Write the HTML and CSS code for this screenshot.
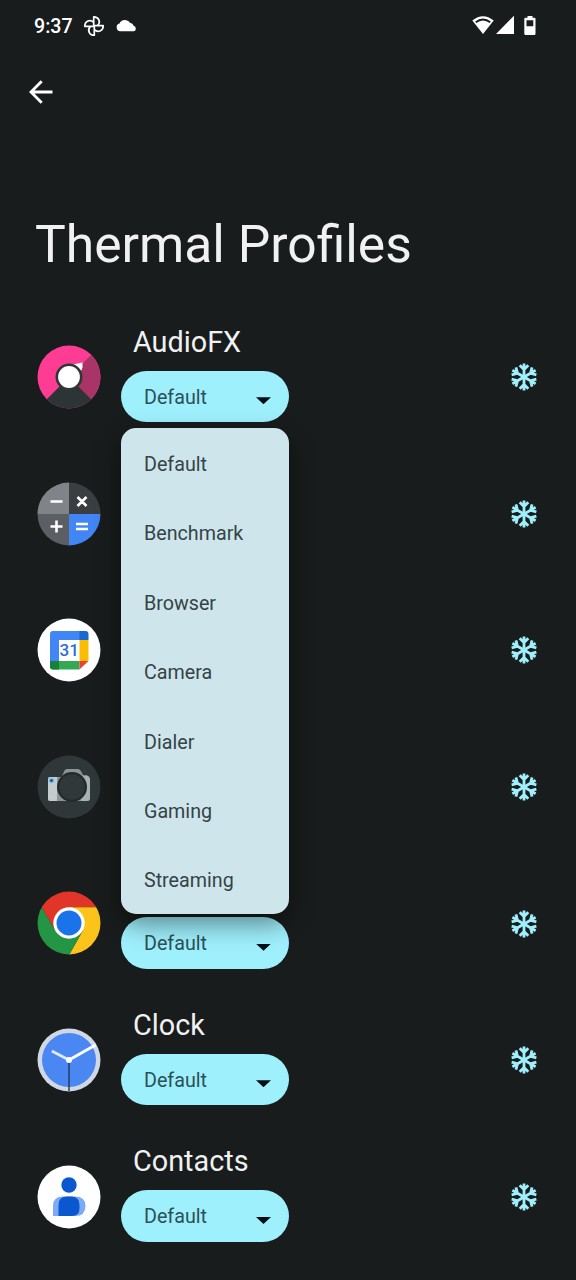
FILE: index.html
```html
<!DOCTYPE html>
<html lang="en">
<head>
<meta charset="utf-8">
<title>Thermal Profiles</title>
<link rel="stylesheet" href="styles.css">
</head>
<body>
<svg width="0" height="0" class="defs" aria-hidden="true">
  <defs>
    <clipPath id="disc"><circle cx="32" cy="32" r="31.5"/></clipPath>
    <g id="arm">
      <path d="M0 0V-13.4M-4.300 -11.800L0 -7.500L4.300 -11.800" fill="none" stroke="#a0effc" stroke-width="2.800"/>
    </g>
    <g id="flake">
      <use href="#arm"/>
      <use href="#arm" transform="rotate(60)"/>
      <use href="#arm" transform="rotate(120)"/>
      <use href="#arm" transform="rotate(180)"/>
      <use href="#arm" transform="rotate(240)"/>
      <use href="#arm" transform="rotate(300)"/>
    </g>
  </defs>
</svg>
<header class="status">
  <span class="time">9:37</span>
  <svg class="fan" width="22" height="22" viewBox="-11 -11 22 22" fill="none" stroke="#fff" stroke-width="1.7" stroke-linejoin="round">
    <path d="M-0.300 0V-9.200C5 -9.200 7 -3.800 3.600 -0.300"/>
    <path d="M-0.300 0V-9.200C5 -9.200 7 -3.800 3.600 -0.300" transform="rotate(90)"/>
    <path d="M-0.300 0V-9.200C5 -9.200 7 -3.800 3.600 -0.300" transform="rotate(180)"/>
    <path d="M-0.300 0V-9.200C5 -9.200 7 -3.800 3.600 -0.300" transform="rotate(270)"/>
  </svg>
  <svg class="cloud" width="21" height="13" viewBox="0 0 20 12"><path d="M4 11.5A3.8 3.8 0 0 1 3.3 4.1A5.8 5.8 0 0 1 13.3 3.3A4 4 0 0 1 16.8 6.3A2.7 2.7 0 0 1 17 11.5Z" fill="#fff"/></svg>
  <span class="grow"></span>
  <svg width="66" height="22" viewBox="0 0 66 22" fill="#fff">
    <path d="M0.3 5.6Q11 -3.3 21.7 5.6L11 19Z"/>
    <path d="M3.7 7.3Q11 1.7 18.3 7.3" fill="none" stroke="#191c1c" stroke-width="1.8"/>
    <path d="M24 19L42 0.8V19Z"/>
    <path fill-rule="evenodd" d="M55.500 1H60.500V2.800H62.500Q63.500 2.800 63.500 3.800V18.500Q63.500 20 62.500 20H53.500Q52.300 20 52.300 18.500V3.800Q52.300 2.800 53.500 2.800H55.500ZM54.500 5.300V11.200H61.300V5.300Z"/>
  </svg>
</header>
<nav class="nav">
  <svg width="24" height="24" viewBox="0 0 24 24" fill="none" stroke="#fff" stroke-width="2.8"><path d="M23.500 12H2.500M12.700 1.200L2 12L12.700 22.800"/></svg>
</nav>
<h1 class="title">Thermal Profiles</h1>
<main class="apps">
  <section class="row">
    <svg class="icon" viewBox="0 0 64 64"><g clip-path="url(#disc)">
      <path d="M0 0H64V64H0Z" fill="#fe3c94"/><path d="M32 32L64 0V64Z" fill="#a93468"/><path d="M32 32L64 64H0Z" fill="#2d3435"/>
      <path d="M34 20L45.500 17.500V22.500L42 31Z" fill="#fff"/><circle cx="32" cy="32" r="13.500" fill="#303638"/><circle cx="32" cy="32" r="10.900" fill="#fff"/></g></svg>
    <div class="profile"><h2 class="name">AudioFX</h2>
      <div class="anchor"><button class="select">Default<i class="caret"></i></button>
        <ul class="menu"><li>Default</li><li>Benchmark</li><li>Browser</li><li>Camera</li><li>Dialer</li><li>Gaming</li><li>Streaming</li></ul>
      </div></div>
    <svg class="snow" viewBox="-14 -14 28 28"><use href="#flake"/></svg>
  </section>
  <section class="row">
    <svg class="icon" viewBox="0 0 64 64"><g clip-path="url(#disc)">
      <path d="M0 0H32V32H0Z" fill="#808489"/><path d="M32 0H64V32H32Z" fill="#3a3e41"/><path d="M0 32H32V64H0Z" fill="#5b5e62"/><path d="M32 32H64V64H32Z" fill="#4285f4"/>
      <path d="M13.500 19.500H25.500M13.500 44.500H25.500M19.500 38.500V50.500M40.500 15L49.500 24M49.500 15L40.500 24M39 42H51M39 47H51" stroke="#fff" stroke-width="2.600"/></g></svg>
    <div class="profile"></div>
    <svg class="snow" viewBox="-14 -14 28 28"><use href="#flake"/></svg>
  </section>
  <section class="row">
    <svg class="icon" viewBox="0 0 64 64"><circle cx="32" cy="32" r="31.500" fill="#fff"/>
      <path d="M16 13H43V22H22V43H13V16Q13 13 16 13Z" fill="#4285f4"/><path d="M42.500 13H48.500Q51.500 13 51.500 16V22H42.500Z" fill="#1967d2"/>
      <path d="M42.500 22H51.500V43H42.500Z" fill="#fbbc04"/><path d="M13 43H42.500V51.500H16Q13 51.500 13 48.500Z" fill="#34a853"/><path d="M13 43H22V51.500H16Q13 51.500 13 48.500Z" fill="#188038"/><path d="M42.500 43H51.500L42.500 51.500Z" fill="#ea4335"/>
      <text x="32.200" y="38" class="day" text-anchor="middle">31</text></svg>
    <div class="profile"></div>
    <svg class="snow" viewBox="-14 -14 28 28"><use href="#flake"/></svg>
  </section>
  <section class="row">
    <svg class="icon" viewBox="0 0 64 64"><circle cx="32" cy="32" r="31.500" fill="#303738"/>
      <path d="M13 22H24.500L27.500 15.500Q28.200 14 30 14H41Q42.500 14 43.500 15.500L46.500 20.500H50Q53 21.500 53 25V43Q53 46 50 46H13Q11 46 11 44V24Q11 22 13 22Z" fill="#8b9694"/>
      <path d="M13 22H20V46H13Q11 46 11 44V24Q11 22 13 22Z" fill="#c4cccd"/><path d="M46 20.500H50Q53 21.500 53 25V43Q53 46 50 46H44Z" fill="#a5b3b1"/>
      <circle cx="35" cy="32" r="15" fill="#242a2c"/><circle cx="35" cy="32" r="12.800" fill="#303839"/><circle cx="14.500" cy="25.500" r="3" fill="#80c4ef"/><circle cx="14.500" cy="25.500" r="1.600" fill="#315870"/></svg>
    <div class="profile"></div>
    <svg class="snow" viewBox="-14 -14 28 28"><use href="#flake"/></svg>
  </section>
  <section class="row">
    <svg class="icon" viewBox="0 0 64 64"><g clip-path="url(#disc)">
      <path d="M0 0H64V16.300H32L18.400 40L4.500 16Z" fill="#e23529"/><path d="M32 16.300H64V64H32L45.600 39.900Z" fill="#fcc31b"/><path d="M4.500 16L18.400 40H45.600L32 64H0V8Z" fill="#249545"/></g>
      <circle cx="32" cy="32" r="15.700" fill="#fff"/><circle cx="32" cy="32" r="12.500" fill="#1a73e8"/></svg>
    <div class="profile"><div class="gap"></div><button class="select">Default<i class="caret"></i></button></div>
    <svg class="snow" viewBox="-14 -14 28 28"><use href="#flake"/></svg>
  </section>
  <section class="row">
    <svg class="icon" viewBox="0 0 64 64"><circle cx="32" cy="32" r="31.500" fill="#cfd8e4"/><circle cx="32" cy="32" r="27" fill="#4a87f3"/>
      <path d="M32 32V63" stroke="#263c60" stroke-width="1.500"/><path d="M14.800 23L32 32" stroke="#dfebff" stroke-width="2.600"/><path d="M32 32L58.500 17" stroke="#fff" stroke-width="3"/><circle cx="32" cy="32" r="3" fill="#fff"/></svg>
    <div class="profile"><h2 class="name">Clock</h2><button class="select">Default<i class="caret"></i></button></div>
    <svg class="snow" viewBox="-14 -14 28 28"><use href="#flake"/></svg>
  </section>
  <section class="row">
    <svg class="icon" viewBox="0 0 64 64"><circle cx="32" cy="32" r="31.500" fill="#fff"/>
      <path d="M16 51V41Q16 31.500 26 31.500H38Q48.500 31.500 48.500 41Q48.500 51 38 51Z" fill="#7baaf7"/><path d="M21.500 51V40Q21.500 31.500 30 31.500H34Q42.500 31.500 42.500 40V43Q42.500 51 35 51Z" fill="#0b57d0"/><circle cx="32" cy="20" r="7.700" fill="#0b57d0"/></svg>
    <div class="profile"><h2 class="name">Contacts</h2><button class="select">Default<i class="caret"></i></button></div>
    <svg class="snow" viewBox="-14 -14 28 28"><use href="#flake"/></svg>
  </section>
</main>
</body>
</html>
```
FILE: styles.css
```css
* { box-sizing: border-box; }
body { margin: 0; width: 576px; height: 1280px; overflow: hidden; background: #191c1c; color: #f0f1f2; font-family: Roboto, "Liberation Sans", sans-serif; }
svg { display: block; flex: none; }
.defs { position: absolute; }
.status { display: flex; align-items: center; height: 51px; padding: 0 38px 0 34px; }
.time { width: 49px; padding-top: 1px; font-size: 19.6px; font-weight: 500; color: #fff; }
.cloud { margin-left: 11px; }
.grow { flex: 1; }
.nav { display: flex; align-items: center; height: 81px; padding-left: 29px; }
.title { margin: 0; height: 176.5px; padding: 81px 0 0 35px; font-size: 51.6px; line-height: 64px; font-weight: 400; white-space: nowrap; }
.row { display: flex; align-items: center; height: 136.6px; padding: 0 38px 0 37.4px; }
.icon { width: 64px; height: 64px; margin-top: 0.6px; }
.profile { width: 168px; height: 136.6px; margin-left: 19.6px; margin-right: auto; padding-top: 12.3px; }
.name { margin: 0; padding-left: 12px; height: 50px; font-size: 28.8px; line-height: 42.6px; font-weight: 400; }
.gap { height: 50px; }
.anchor { position: relative; }
.select { display: flex; align-items: center; justify-content: space-between; width: 168px; height: 51.5px; padding: 1.6px 18px 0 23px; border: 0; border-radius: 26px; background: #9ff0fd; color: #2c5058; font: 400 19.7px Roboto, sans-serif; }
.caret { width: 15px; height: 7px; margin-top: 7px; background: #000f14; clip-path: polygon(0 0, 100% 0, 50% 100%); }
.menu { position: absolute; z-index: 2; top: 57.3px; left: 0; width: 168px; height: 485.5px; margin: 0; padding: 0; list-style: none; border-radius: 15px; background: #cee6eb; color: #354347; font-size: 19.7px; box-shadow: 0 10px 26px rgba(0, 0, 0, 0.45); }
.menu li { height: 69.36px; padding-left: 23px; line-height: 73.6px; }
.day { font: 500 17px Roboto, sans-serif; fill: #2b6fd6; }
.snow { width: 28px; height: 28px; margin-top: 0.8px; }
```
